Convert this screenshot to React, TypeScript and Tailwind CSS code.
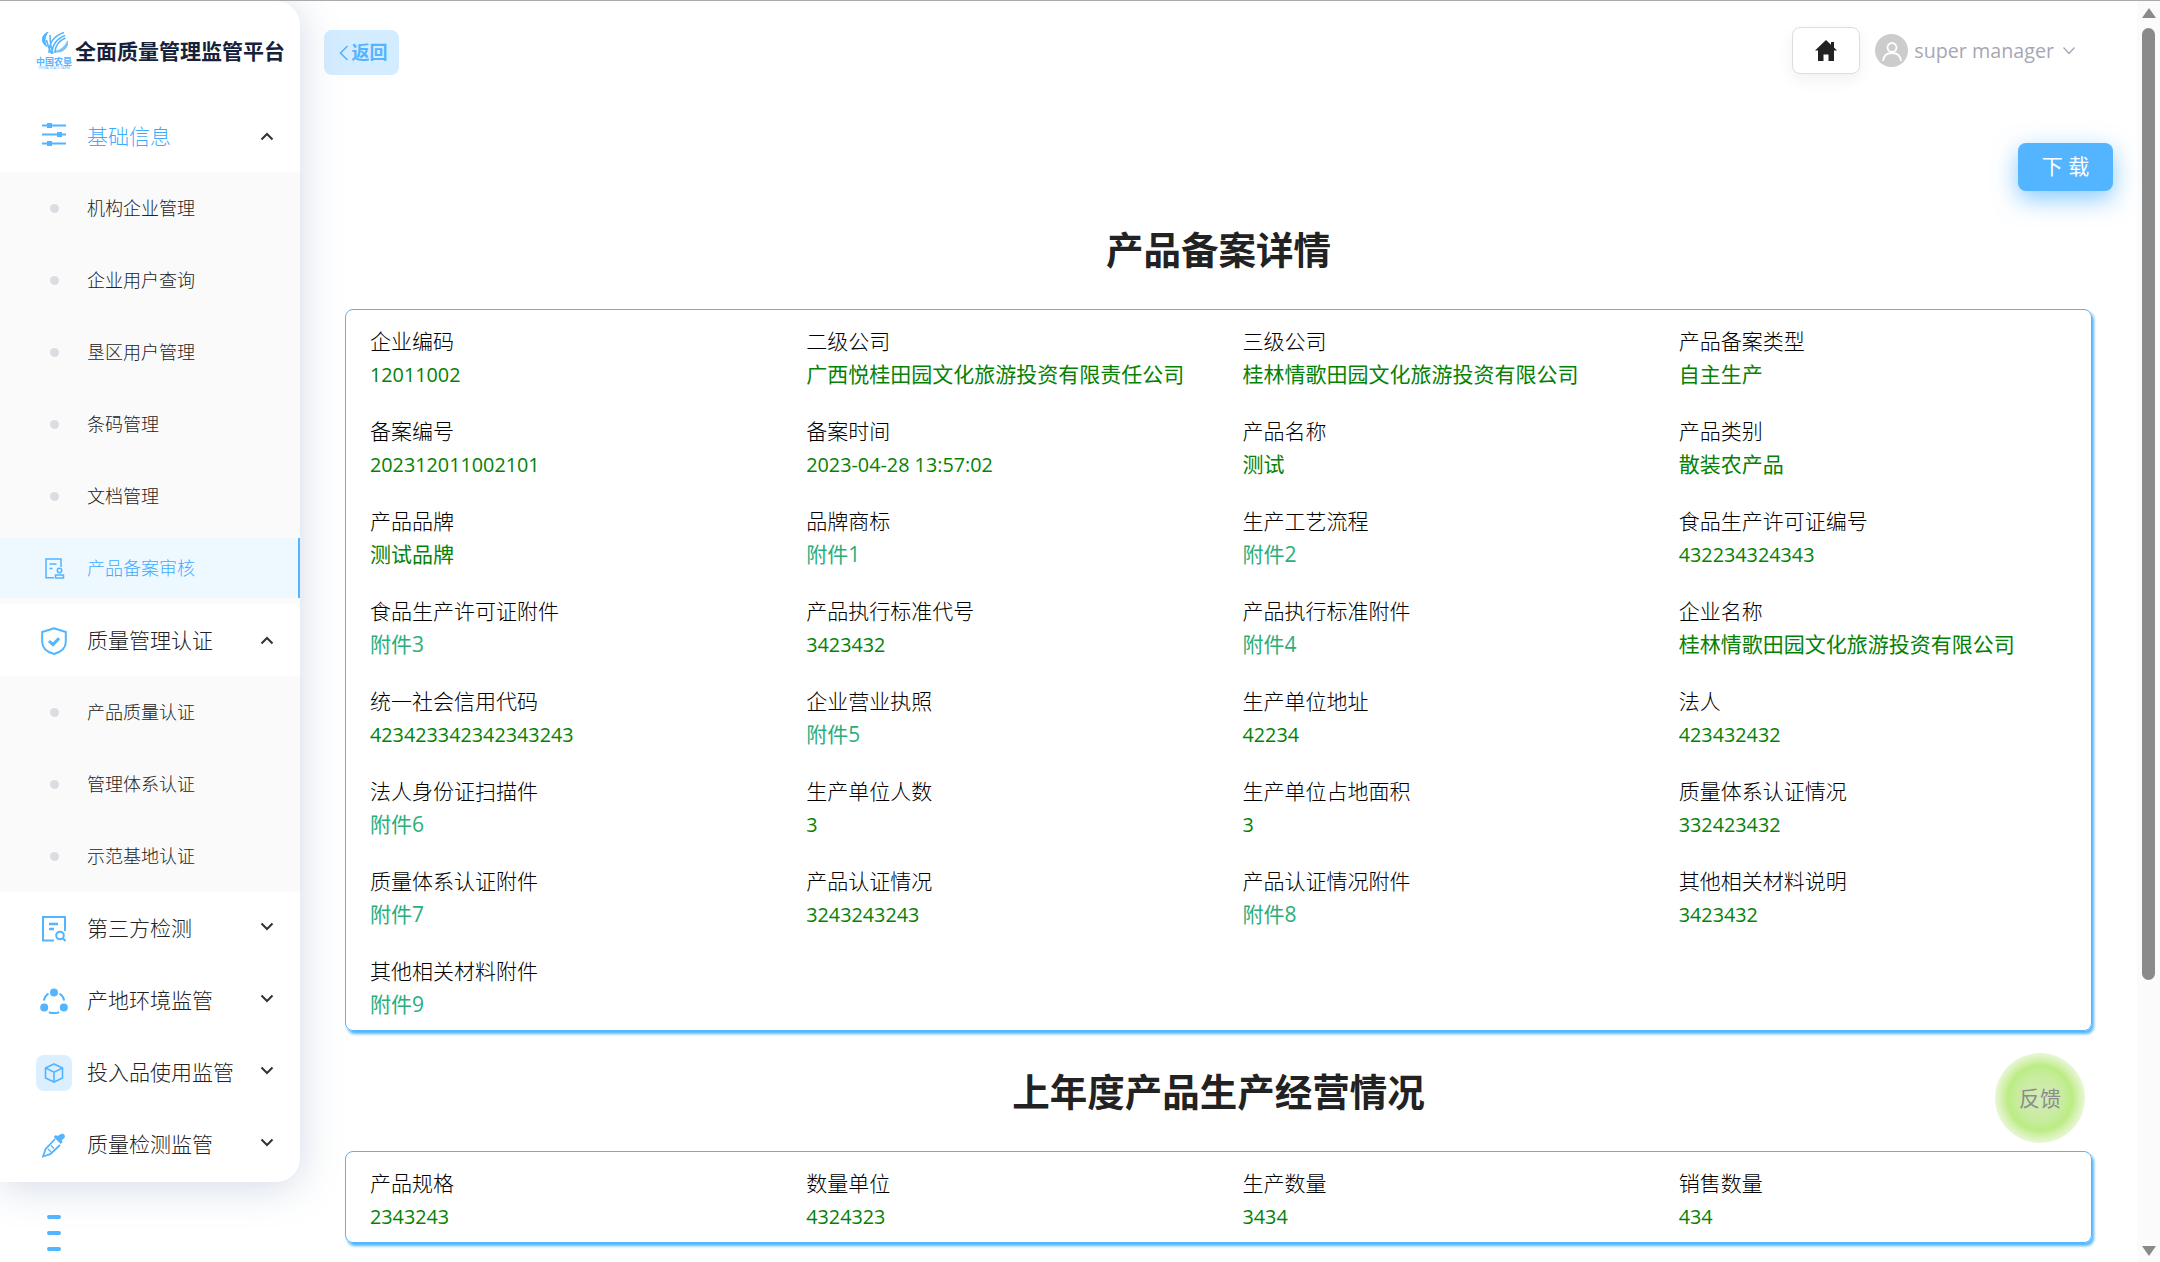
import React from "react";

const BLUE = "#53b4ff";

const Chevron: React.FC<{ up?: boolean }> = ({ up }) => (
  <svg
    width="14"
    height="9"
    viewBox="0 0 14 9"
    fill="none"
    stroke="#333"
    strokeWidth="2"
    className={up ? "mb-[2px]" : "mb-[6px]"}
  >
    {up ? <path d="M1.5 7.5 7 2l5.5 5.5" /> : <path d="M1.5 1.5 7 7l5.5-5.5" />}
  </svg>
);

const SlidersIcon = () => (
  <svg width="24" height="24" viewBox="0 0 24 24" fill={BLUE} className="mb-[6px]">
    <rect x="0" y="2.500" width="24" height="2" />
    <rect x="0" y="11.500" width="24" height="2" />
    <rect x="0" y="20.500" width="24" height="2" />
    <rect x="5" y="1" width="5" height="5" />
    <rect x="15" y="10" width="5" height="5" />
    <rect x="5" y="19" width="5" height="5" />
  </svg>
);

const ShieldIcon = () => (
  <svg width="26" height="28" viewBox="0 0 26 28" fill="none" stroke={BLUE} strokeWidth="2">
    <path d="M13 1.2 24.8 5v10c0 6-5 10-11.8 12C6 25 1.2 21 1.2 15V5z" />
    <path d="M8 14l4 3.6 6-6.4" strokeWidth="3" />
  </svg>
);

const DocSearchIcon = () => (
  <svg width="24" height="26" viewBox="0 0 24 26" fill="none" stroke={BLUE} strokeWidth="2">
    <path d="M12 24.5H1V1h22v14" />
    <path d="M7 8h9M7 13h5" strokeWidth="2.4" />
    <circle cx="18" cy="19.5" r="3.8" />
    <path d="m21 22.5 2.5 2.5" />
  </svg>
);

const NodesIcon = () => (
  <svg width="28" height="26" viewBox="0 0 28 26" fill="none" stroke={BLUE} strokeWidth="2">
    <circle cx="14" cy="4.5" r="4" fill={BLUE} stroke="none" />
    <circle cx="4.2" cy="19.5" r="4" fill={BLUE} stroke="none" />
    <circle cx="23.8" cy="19.5" r="4" fill={BLUE} stroke="none" />
    <path d="M8.5 5.5C6 7.2 4.4 9.5 3.8 12.5M19.5 5.5c2.5 1.7 4.1 4 4.7 7M8.8 24.2c3.4 1.2 7 1.2 10.4 0" />
  </svg>
);

const BoxIcon = () => (
  <div className="flex h-9 w-9 items-center justify-center rounded-lg bg-[#dcefff]">
    <svg width="20" height="20" viewBox="0 0 20 20" fill="none" stroke={BLUE} strokeWidth="1.6">
      <path d="M10 1 18.5 5v10L10 19l-8.500-4V5z" />
      <path d="M1.500 5 10 9.200 18.500 5M10 9.200V19" />
    </svg>
  </div>
);

const PipetteIcon = () => (
  <svg width="24" height="25" viewBox="0 0 24 25" fill="none" stroke={BLUE} strokeWidth="1.8">
    <path d="M17 1.500c2-1 4.500 1 3.500 3.500l-3 3 1 1.500-2 2-7-7 2-2 1.500 1z" fill={BLUE} stroke="none" transform="translate(2.200 -.5)" />
    <path d="M13 6 4 15.500c-1 1-1 3-1.500 4L1 23.500l4.500-1.500c1-.5 2.500-.5 3.500-1.500L18 12" />
    <path d="m6 16 3 3M9 12.500l3 3" strokeWidth="1.400" />
  </svg>
);

const DocUserIcon = () => (
  <svg width="20" height="21" viewBox="0 0 20 21" fill="none" stroke={BLUE} strokeWidth="1.500">
    <path d="M9 19.700H1V1h15v8" />
    <path d="M4.500 6h7M4.500 10.500h3" />
    <circle cx="14.500" cy="12.500" r="2.200" />
    <path d="M10.500 20v-3h8v3z" />
  </svg>
);

const LogoMark = () => (
  <div className="flex w-[36px] flex-col items-center leading-none text-[#53b4ff]">
    <svg width="27" height="24" viewBox="0 0 27 24" fill="none" stroke={BLUE}>
      <path d="M7 0C0 3-.5 11 6 14.500 3 10 3.500 5 7 0z" fill={BLUE} />
      <path d="M26.500 9c1.500 7-6 13-13.500 10.500 6-.5 11-4.500 13.500-10.500z" fill={BLUE} opacity=".8" />
      <path d="M8 21C8 12 12 4 23 .5M11 22c0-8 4-15 13-18.500M14 21c0-7 3-12 10.500-15M9 3c0 6 1 13 3 18.500M5.500 8c1 5 2.500 9 5 13.500" strokeWidth="1.500" />
    </svg>
    <span className="mt-px text-[9px] font-bold">中国农垦</span>
    <span className="text-[3.500px]">CHINA STATE FARM</span>
  </div>
);

const groups = [
  {
    title: "基础信息",
    icon: <SlidersIcon />,
    open: true,
    active: true,
    items: ["机构企业管理", "企业用户查询", "垦区用户管理", "条码管理", "文档管理", "产品备案审核"],
  },
  {
    title: "质量管理认证",
    icon: <ShieldIcon />,
    open: true,
    items: ["产品质量认证", "管理体系认证", "示范基地认证"],
  },
  { title: "第三方检测", icon: <DocSearchIcon /> },
  { title: "产地环境监管", icon: <NodesIcon /> },
  { title: "投入品使用监管", icon: <BoxIcon /> },
  { title: "质量检测监管", icon: <PipetteIcon /> },
];

const Sidebar: React.FC = () => (
  <div className="relative z-10 flex w-[300px] shrink-0 flex-col">
    <aside className="rounded-r-[24px] bg-white pb-[2px] shadow-[0_4px_40px_rgba(90,120,160,0.28)]">
      <div className="flex h-[99px] items-center pl-[36px]">
        <LogoMark />
        <span className="ml-[3px] pt-[2px] text-[21px] font-bold text-[#16213a]">全面质量管理监管平台</span>
      </div>
      {groups.map((group) => (
        <div key={group.title}>
          <div className="flex h-[72px] items-center justify-between pr-[26px] pt-[2px]">
            <div className="flex items-center">
              <div className="ml-[36px] flex w-[36px] justify-center">{group.icon}</div>
              <span className={`ml-[15px] text-[21px] font-light ${group.active ? "text-[#40aaff]" : "text-[#222]"}`}>
                {group.title}
              </span>
            </div>
            <Chevron up={group.open} />
          </div>
          {group.items && (
            <ul className="bg-[#fafafa] font-light">
              {group.items.map((item) =>
                item === "产品备案审核" ? (
                  <li key={item} className="flex h-[72px] items-center">
                    <div className="flex h-[60px] w-full items-center border-r-2 border-[#53b4ff] bg-[#edf9ff] pl-[45px] text-[18px] text-[#40aaff]">
                      <DocUserIcon />
                      <span className="ml-[22px]">{item}</span>
                    </div>
                  </li>
                ) : (
                  <li key={item} className="flex h-[72px] items-center pl-[50px] text-[18px] text-[#222]">
                    <span className="h-[9px] w-[9px] rounded-full bg-[#dcdde3]" />
                    <span className="ml-[28px]">{item}</span>
                  </li>
                )
              )}
            </ul>
          )}
        </div>
      ))}
    </aside>
    <div className="ml-[47px] mt-[33px] flex w-[14px] flex-col gap-3">
      <span className="h-1 rounded-full bg-[#53b4ff]" />
      <span className="h-1 rounded-full bg-[#53b4ff]" />
      <span className="h-1 rounded-full bg-[#53b4ff]" />
    </div>
  </div>
);

const detailFields: [string, string][] = [
  ["企业编码", "12011002"],
  ["二级公司", "广西悦桂田园文化旅游投资有限责任公司"],
  ["三级公司", "桂林情歌田园文化旅游投资有限公司"],
  ["产品备案类型", "自主生产"],
  ["备案编号", "202312011002101"],
  ["备案时间", "2023-04-28 13:57:02"],
  ["产品名称", "测试"],
  ["产品类别", "散装农产品"],
  ["产品品牌", "测试品牌"],
  ["品牌商标", "附件1"],
  ["生产工艺流程", "附件2"],
  ["食品生产许可证编号", "432234324343"],
  ["食品生产许可证附件", "附件3"],
  ["产品执行标准代号", "3423432"],
  ["产品执行标准附件", "附件4"],
  ["企业名称", "桂林情歌田园文化旅游投资有限公司"],
  ["统一社会信用代码", "423423342342343243"],
  ["企业营业执照", "附件5"],
  ["生产单位地址", "42234"],
  ["法人", "423432432"],
  ["法人身份证扫描件", "附件6"],
  ["生产单位人数", "3"],
  ["生产单位占地面积", "3"],
  ["质量体系认证情况", "332423432"],
  ["质量体系认证附件", "附件7"],
  ["产品认证情况", "3243243243"],
  ["产品认证情况附件", "附件8"],
  ["其他相关材料说明", "3423432"],
  ["其他相关材料附件", "附件9"],
];

const salesFields: [string, string][] = [
  ["产品规格", "2343243"],
  ["数量单位", "4324323"],
  ["生产数量", "3434"],
  ["销售数量", "434"],
];

const Field: React.FC<{ label: string; value: string }> = ({ label, value }) => {
  const isFile = value.startsWith("附件");
  const isNumber = /^[\d\-: ]+$/.test(value);
  return (
    <div className="pl-[24px] text-[21px] leading-[33px]">
      <div className="font-light text-black">{label}</div>
      <div className={`${isFile ? "text-[#2bae7c]" : "text-[#058205]"} ${isNumber ? "text-[19.800px]" : ""}`}>
        {value}
      </div>
    </div>
  );
};

const InfoCard: React.FC<{ fields: [string, string][] }> = ({ fields }) => (
  <div className="mt-[34px] grid grid-cols-4 gap-y-6 rounded-lg border border-[#54b5ff] pb-[9px] pt-[15px] shadow-[2px_3px_3px_#54b5ff]">
    {fields.map(([label, value]) => (
      <Field key={label} label={label} value={value} />
    ))}
  </div>
);

const Scrollbar = () => (
  <div className="flex w-[23px] shrink-0 flex-col bg-[#fbfbfb] pl-[5px] pt-[7px]">
    <svg width="14" height="10" viewBox="0 0 14 10" fill="#8a8a8a">
      <path d="M7 0 14 10H0z" />
    </svg>
    <div className="mt-[10px] h-[952px] w-[13px] rounded-full bg-[#8a8a8a]" />
    <svg width="14" height="10" viewBox="0 0 14 10" fill="#8a8a8a" className="mt-[266px]">
      <path d="M0 0h14L7 10z" />
    </svg>
  </div>
);

const App: React.FC = () => (
  <div className="flex h-[1262px] flex-col overflow-hidden bg-white font-['Open_Sans','Noto_Sans_CJK_SC',sans-serif]">
    <div className="h-px bg-[#aaaaaa]" />
    <div className="relative flex flex-1 overflow-hidden">
      <Sidebar />
      <main className="relative flex-1">
        <div className="flex items-start justify-between pl-[24px] pr-[61px] pt-[26px]">
          <button className="mt-[3px] flex h-[45px] w-[75px] items-center justify-center rounded-lg bg-[#d4ecff] pl-[3px] text-[18px] font-bold text-[#53b4ff]">
            <svg width="10" height="16" viewBox="0 0 10 16" fill="none" stroke="#53b4ff" strokeWidth="1.600" className="mr-[3px]">
              <path d="M8.500 1 1.500 8l7 7" />
            </svg>
            返回
          </button>
          <div className="flex items-center">
            <div className="flex h-[47px] w-[68px] items-center justify-center rounded-lg border border-[#dddddd] shadow-[0_6px_16px_rgba(0,0,0,0.06)]">
              <svg width="22" height="21" viewBox="0 0 22 21" fill="#222">
                <path d="M11 0 0 10.500h3V21h5.500v-6.500h5V21H19V10.500h3l-3-3V2h-3v2.800z" />
              </svg>
            </div>
            <div className="ml-[15px] flex h-[33px] w-[33px] items-center justify-center rounded-full bg-[#cccccc]">
              <svg width="22" height="22" viewBox="0 0 22 22" fill="none" stroke="#fff" strokeWidth="1.800">
                <circle cx="11" cy="7.500" r="4.500" />
                <path d="M2 21c.5-5 4-8 9-8s8.500 3 9 8" />
              </svg>
            </div>
            <span className="ml-[6px] text-[19.700px] text-[#a5a8b3]">super manager</span>
            <svg width="14" height="9" viewBox="0 0 14 9" fill="none" stroke="#a5a8b3" strokeWidth="1.300" className="ml-[8px]">
              <path d="M1.500 1.500 7 7.500l5.500-6" />
            </svg>
          </div>
        </div>
        <div className="ml-[45px] mr-[45px]">
          <div className="mt-[68px] flex justify-end">
            <button className="-mr-[21px] h-[48px] w-[95px] rounded-lg bg-[#53b4ff] text-[21px] text-white shadow-[0_8px_24px_rgba(83,180,255,0.7)]">
              下 载
            </button>
          </div>
          <h1 className="mt-[34px] text-center text-[37.500px] font-bold leading-[50px] text-[#222]">产品备案详情</h1>
          <InfoCard fields={detailFields} />
          <h1 className="mt-[36px] text-center text-[37.500px] font-bold leading-[50px] text-[#222]">上年度产品生产经营情况</h1>
          <InfoCard fields={salesFields} />
        </div>
        <div className="absolute right-[52px] top-[1052px] flex h-[90px] w-[90px] items-center justify-center rounded-full bg-[radial-gradient(circle_closest-side,#d3ebb8_0%,#c8ec9f_50%,#bcec84_72%,#d2f0ac_84%,#e8f7d6_100%)] pt-[2px] text-[21px] text-[#8c8c8c]">
          反馈
        </div>
      </main>
      <Scrollbar />
    </div>
  </div>
);

export default App;
